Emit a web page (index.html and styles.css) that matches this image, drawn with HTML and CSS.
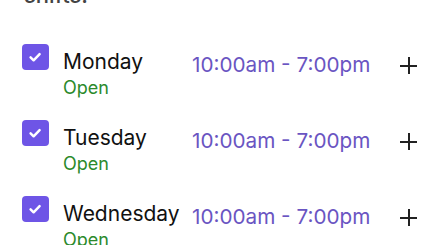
FILE: index.html
```html
<!DOCTYPE html>
<html>
<head>
<meta charset="utf-8">
<link rel="stylesheet" href="styles.css">
</head>
<body>
<div class="page">
  <h2 class="heading">shifts.</h2>
  <ul class="days">
    <li class="day">
      <span class="check"><svg viewBox="0 0 26 26" width="26" height="26"><path d="M8.6 13.4l3 2.9L17.6 10.2" fill="none" stroke="#fff" stroke-width="2.5" stroke-linecap="round" stroke-linejoin="round"/></svg></span>
      <div class="info"><div class="name">Monday</div><div class="status">Open</div></div>
      <div class="time">10:00am - 7:00pm</div>
      <span class="plus"></span>
    </li>
    <li class="day">
      <span class="check"><svg viewBox="0 0 26 26" width="26" height="26"><path d="M8.6 13.4l3 2.9L17.6 10.2" fill="none" stroke="#fff" stroke-width="2.5" stroke-linecap="round" stroke-linejoin="round"/></svg></span>
      <div class="info"><div class="name">Tuesday</div><div class="status">Open</div></div>
      <div class="time">10:00am - 7:00pm</div>
      <span class="plus"></span>
    </li>
    <li class="day">
      <span class="check"><svg viewBox="0 0 26 26" width="26" height="26"><path d="M8.6 13.4l3 2.9L17.6 10.2" fill="none" stroke="#fff" stroke-width="2.5" stroke-linecap="round" stroke-linejoin="round"/></svg></span>
      <div class="info"><div class="name">Wednesday</div><div class="status">Open</div></div>
      <div class="time">10:00am - 7:00pm</div>
      <span class="plus"></span>
    </li>
  </ul>
</div>
</body>
</html>
```
FILE: styles.css
```css
html, body { margin: 0; padding: 0; background: #fff; }
body { font-family: Inter, "Noto Sans", sans-serif; color: #1a1a1a; overflow: hidden; }
.page { padding: 0 0 0 22px; }
.heading { margin: -18px 0 0 2px; font-size: 22px; line-height: 26px; font-weight: 500; color: #444; }
.days { list-style: none; margin: 36px 0 0; padding: 0; display: flex; flex-direction: column; gap: 24px; }
.day { display: flex; align-items: flex-start; height: 52px; }
.check { width: 27px; height: 26px; border-radius: 4px; background: #6e55e6; flex: none; display: block; }
.check svg { display: block; }
.info { margin-left: 14px; width: 129px; flex: none; }
.name { font-size: 21px; line-height: 30px; color: #111; margin-top: 3px; }
.status { font-size: 18px; line-height: 20px; color: #2c8a2c; margin-top: 1px; }
.time { font-size: 20.7px; line-height: 30px; color: #6a55c2; width: 208px; flex: none; margin-top: 6px; }
.plus { position: relative; width: 17px; height: 17px; margin-top: 13px; flex: none; }
.plus::before, .plus::after { content: ""; position: absolute; background: #222; }
.plus::before { left: 0; right: 0; top: 8px; height: 1.5px; }
.plus::after { top: 0; bottom: 0; left: 8px; width: 1.5px; }
```
